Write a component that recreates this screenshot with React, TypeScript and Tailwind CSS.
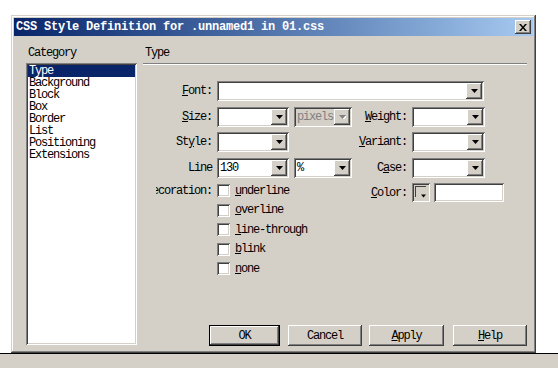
import * as React from "react";

const sunken =
	"shadow-[inset_1px_1px_#808080,inset_-1px_-1px_#ffffff,inset_2px_2px_#404040,inset_-2px_-2px_#d4d0c8]";
const raised =
	"shadow-[inset_-1px_-1px_#404040,inset_1px_1px_#ffffff,inset_-2px_-2px_#808080,inset_2px_2px_#d4d0c8]";
const txt = "font-['Liberation_Mono','DejaVu_Sans_Mono',monospace] text-[12px] leading-[12px] tracking-[-1.2px]";

const CATEGORIES = ["Type", "Background", "Block", "Box", "Border", "List", "Positioning", "Extensions"];

const Key: React.FC<{ children: React.ReactNode }> = ({ children }) => (
	<span className="underline underline-offset-[1px]">{children}</span>
);

const Arrow: React.FC<{ disabled?: boolean }> = ({ disabled }) => (
	<div className={`flex h-[16px] w-[16px] shrink-0 items-center justify-center bg-[#d4d0c8] ${raised}`}>
		<svg width="7" height="4" viewBox="0 0 7 4">
			{disabled && <path d="M1 1h7l-3.5 4z" fill="#ffffff" />}
			<path d="M0 0h7L3.5 4z" fill={disabled ? "#808080" : "#000000"} />
		</svg>
	</div>
);

const Select: React.FC<{ width: string; value?: string; disabled?: boolean }> = ({ width, value, disabled }) => (
	<div className={`flex h-[20px] ${width} p-[2px] ${sunken} ${disabled ? "bg-[#d4d0c8]" : "bg-white"}`}>
		<div className={`flex-1 overflow-hidden pl-[1px] leading-[16px] ${disabled ? "text-[#808080]" : "text-black"}`}>
			{value}
		</div>
		<Arrow disabled={disabled} />
	</div>
);

const Label: React.FC<{ width: string; children: React.ReactNode }> = ({ width, children }) => (
	<div className={`${width} shrink-0 text-right`}>{children}</div>
);

const Check: React.FC<{ children: React.ReactNode }> = ({ children }) => (
	<div className="flex h-[19.5px] items-center gap-[5px]">
		<div className={`h-[13px] w-[13px] bg-white ${sunken}`} />
		<span>{children}</span>
	</div>
);

const Button: React.FC<{ width: string; isDefault?: boolean; children: React.ReactNode }> = ({
	width,
	isDefault,
	children,
}) => (
	<div className={`h-[21px] ${width} ${isDefault ? "border border-black" : ""}`}>
		<div className={`flex h-full w-full items-center justify-center bg-[#d4d0c8] ${raised}`}>{children}</div>
	</div>
);

export default function App() {
	return (
		<div className={`flex h-[368px] w-[558px] flex-col overflow-hidden bg-white text-black ${txt}`}>
			<div className="h-[15px] shrink-0" />
			<div className="flex h-[338px] shrink-0 pl-[11px]">
				{/* window */}
				<div className={`flex h-full w-[525px] flex-col bg-[#d4d0c8] p-[3px] shadow-[inset_-1px_-1px_#404040,inset_1px_1px_#d4d0c8,inset_-2px_-2px_#808080,inset_2px_2px_#ffffff]`}>
					<div className="flex h-[18px] shrink-0 items-center bg-linear-to-r from-[#0a246a] to-[#a6caf0] pr-[2px] pl-[2px]">
						<span className="flex-1 font-bold tracking-[-0.2px] text-white">
							CSS Style Definition for .unnamed1 in 01.css
						</span>
						<div className={`flex h-[14px] w-[16px] items-center justify-center bg-[#d4d0c8] ${raised}`}>
							<svg width="8" height="7" viewBox="0 0 8 7">
								<path d="M0 0h2l2 2.5L6 0h2L5 3.5 8 7H6L4 4.5 2 7H0l3-3.5z" fill="#000" />
							</svg>
						</div>
					</div>

					<div className="flex flex-1 pt-[11px] pl-[12px]">
						{/* category */}
						<div className="flex w-[111px] flex-col">
							<div className="h-[12px] pl-[2px]">Category</div>
							<div className={`mt-[4px] h-[282px] bg-white p-[2px] ${sunken}`}>
								{CATEGORIES.map((c, i) => (
									<div
										key={c}
										className={`h-[12px] px-[1px] ${i === 0 ? "bg-[#0a246a] text-white" : ""}`}
									>
										{c}
									</div>
								))}
							</div>
						</div>

						{/* panel */}
						<div className="ml-[6px] flex w-[384px] flex-col pb-[4px]">
							<div className="h-[12px] pl-[2px]">Type</div>
							<div className="mt-[4px] h-[2px] border-t border-b border-t-[#808080] border-b-white" />

							<div className="mt-[16px] flex flex-col gap-[5.5px]">
								<div className="flex items-center gap-[5px]">
									<Label width="w-[69px]">
										<Key>F</Key>ont:
									</Label>
									<Select width="w-[267px]" />
								</div>

								<div className="flex items-center">
									<div className="flex w-[209px] items-center gap-[5px]">
										<Label width="w-[69px]">
											<Key>S</Key>ize:
										</Label>
										<Select width="w-[72px]" />
										<Select width="w-[58px]" value="pixels" disabled />
									</div>
									<div className="flex items-center gap-[5px]">
										<Label width="w-[55px]">
											<Key>W</Key>eight:
										</Label>
										<Select width="w-[73px]" />
									</div>
								</div>

								<div className="flex items-center">
									<div className="flex w-[209px] items-center gap-[5px]">
										<Label width="w-[69px]">
											St<Key>y</Key>le:
										</Label>
										<Select width="w-[72px]" />
									</div>
									<div className="flex items-center gap-[5px]">
										<Label width="w-[55px]">
											<Key>V</Key>ariant:
										</Label>
										<Select width="w-[73px]" />
									</div>
								</div>

								<div className="flex items-center">
									<div className="flex w-[209px] items-center gap-[5px]">
										<Label width="w-[69px]">Line</Label>
										<Select width="w-[72px]" value="130" />
										<Select width="w-[58px]" value="%" />
									</div>
									<div className="flex items-center gap-[5px]">
										<Label width="w-[55px]">
											C<Key>a</Key>se:
										</Label>
										<Select width="w-[73px]" />
									</div>
								</div>

								<div className="flex items-start">
									<div className="-mt-[2px] flex w-[209px] items-start gap-[5px]">
										<div className="flex w-[69px] shrink-0 justify-end">
											<div className="flex h-[19.5px] w-[56px] items-center justify-end overflow-hidden whitespace-nowrap">
												<span className="shrink-0">Decoration:</span>
											</div>
										</div>
										<div className="flex flex-col">
											<Check>
												<Key>u</Key>nderline
											</Check>
											<Check>
												<Key>o</Key>verline
											</Check>
											<Check>
												<Key>l</Key>ine-through
											</Check>
											<Check>
												<Key>b</Key>link
											</Check>
											<Check>
												<Key>n</Key>one
											</Check>
										</div>
									</div>
									<div className="flex h-[19px] items-center gap-[5px]">
										<Label width="w-[55px]">
											<Key>C</Key>olor:
										</Label>
										<div className={`relative h-[19px] w-[18px] bg-[#d4d0c8] ${sunken}`}>
											<div className="absolute top-[3px] left-[3px] h-[11px] w-[11px] border-t border-l border-[#404040]" />
											<div className="absolute right-[3px] bottom-[3px] h-[6px] w-[7px] bg-[#d4d0c8]">
												<svg width="7" height="6" viewBox="0 0 7 6">
													<path d="M1 1.5h5L3.5 4.5z" fill="#000" />
												</svg>
											</div>
										</div>
										<div className={`ml-[-1px] h-[19px] w-[70px] bg-white ${sunken}`} />
									</div>
								</div>
							</div>

							<div className="mt-auto flex pl-[66px]">
								<Button width="w-[73px]" isDefault>
									OK
								</Button>
								<div className="ml-[8px]">
									<Button width="w-[74px]">Cancel</Button>
								</div>
								<div className="ml-[7px]">
									<Button width="w-[75px]">
										<Key>A</Key>pply
									</Button>
								</div>
								<div className="ml-[9px]">
									<Button width="w-[74px]">
										<Key>H</Key>elp
									</Button>
								</div>
							</div>
						</div>
					</div>
				</div>
			</div>
			<div className="h-[15px] shrink-0 border-t border-black bg-[#d4d0c8]" />
		</div>
	);
}
